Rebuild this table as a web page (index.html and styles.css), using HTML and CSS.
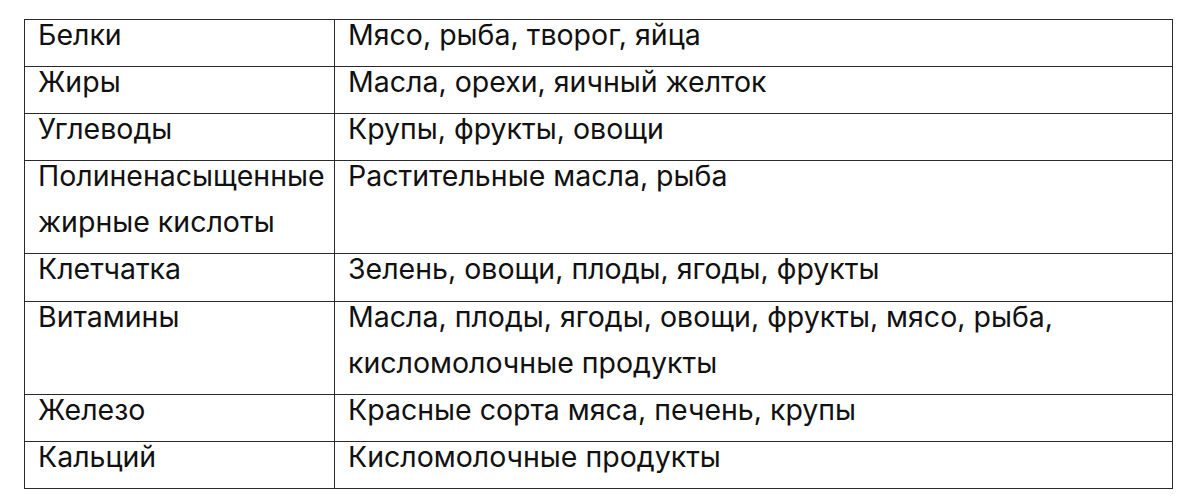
FILE: index.html
```html
<!DOCTYPE html>
<html lang="ru">
<head>
<meta charset="utf-8">
<link rel="stylesheet" href="styles.css">
</head>
<body>
<table class="food">
  <colgroup><col class="c1"><col class="c2"></colgroup>
  <tr><td><div class="t">Белки</div></td><td><div class="t">Мясо, рыба, творог, яйца</div></td></tr>
  <tr><td><div class="t">Жиры</div></td><td><div class="t">Масла, орехи, яичный желток</div></td></tr>
  <tr><td><div class="t">Углеводы</div></td><td><div class="t">Крупы, фрукты, овощи</div></td></tr>
  <tr><td><div class="t">Полиненасыщенные<br>жирные кислоты</div></td><td><div class="t">Растительные масла, рыба</div></td></tr>
  <tr><td><div class="t">Клетчатка</div></td><td><div class="t">Зелень, овощи, плоды, ягоды, фрукты</div></td></tr>
  <tr><td><div class="t">Витамины</div></td><td><div class="t">Масла, плоды, ягоды, овощи, фрукты, мясо, рыба,<br>кисломолочные продукты</div></td></tr>
  <tr><td><div class="t">Железо</div></td><td><div class="t">Красные сорта мяса, печень, крупы</div></td></tr>
  <tr><td><div class="t">Кальций</div></td><td><div class="t">Кисломолочные продукты</div></td></tr>
</table>
</body>
</html>
```
FILE: styles.css
```css
html, body {
  margin: 0;
  padding: 0;
  background: #ffffff;
}
body {
  padding: 19px 0 0 24px;
  font-family: Inter, "Liberation Sans", Arial, sans-serif;
  color: #111111;
}
.food {
  border-collapse: collapse;
  width: 1149px;
  table-layout: fixed;
}
.c1 { width: 310px; }
.food td {
  border: 1px solid #2a2a2a;
  padding: 0 0 0 13px;
  vertical-align: top;
  font-size: 28.5px;
}
.t {
  line-height: 46.1px;
  margin: -8px 0 8px 0;
  white-space: nowrap;
}
```
